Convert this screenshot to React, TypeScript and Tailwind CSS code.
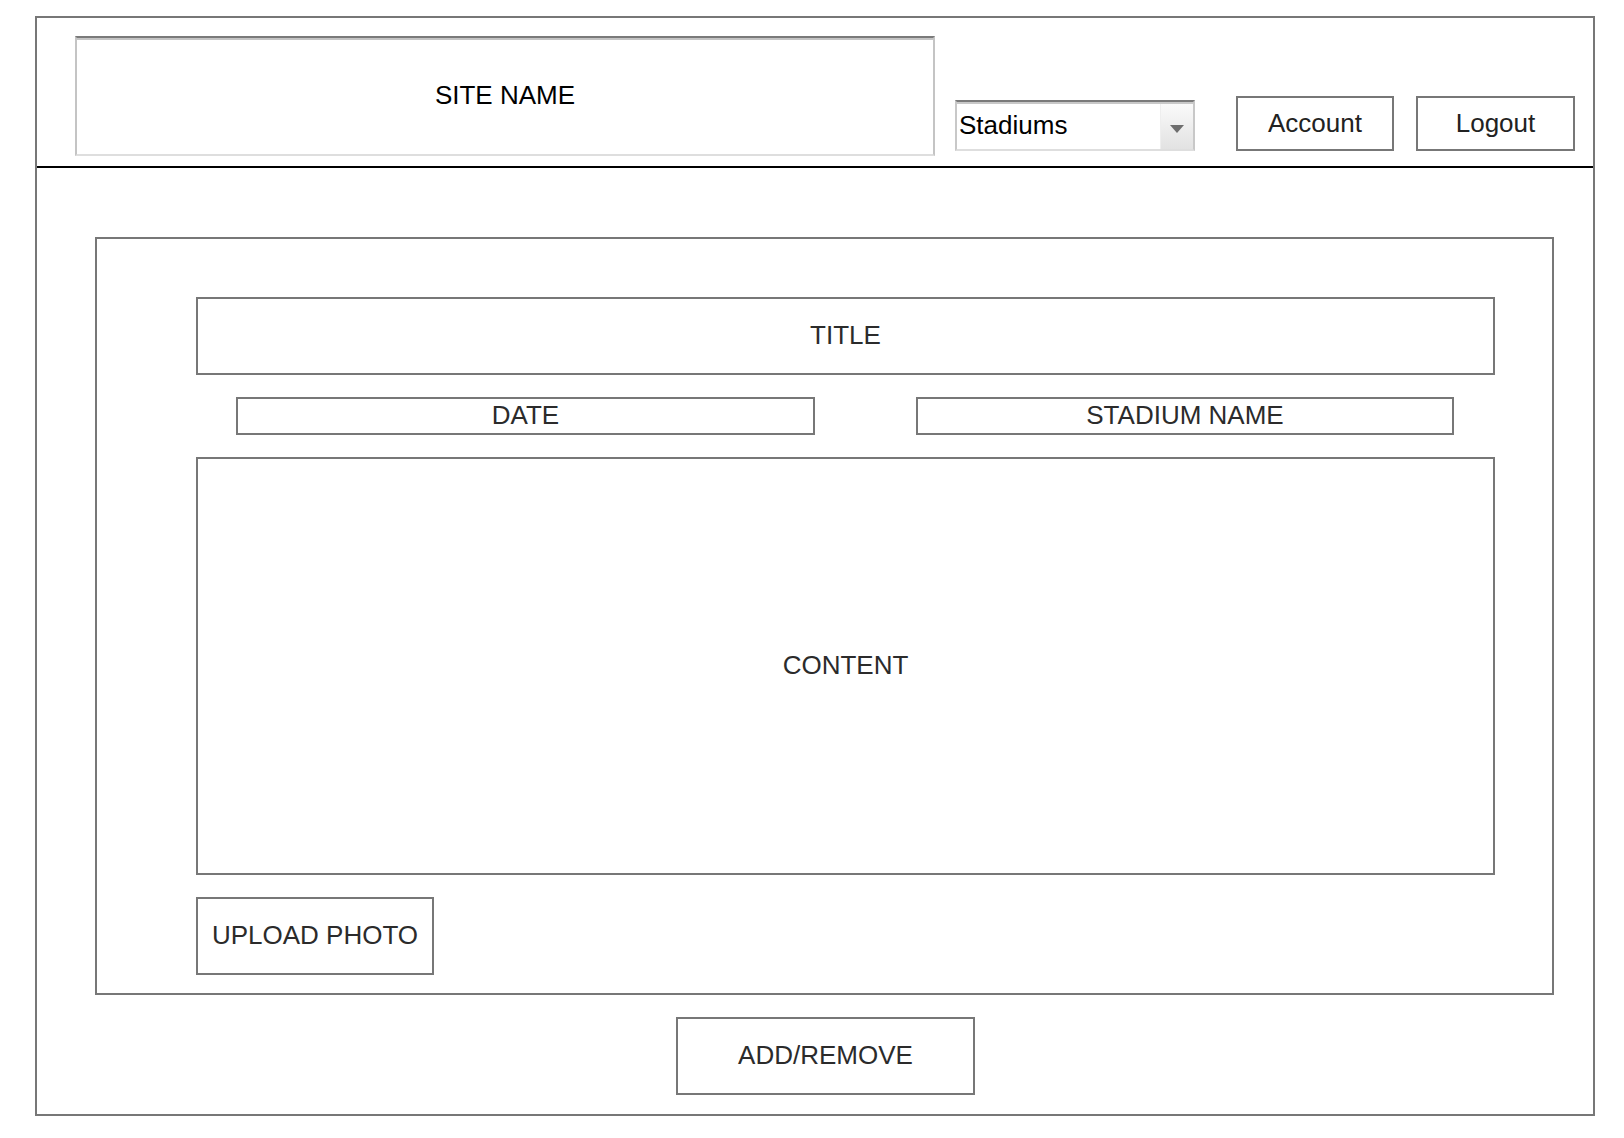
import React from "react";

const font = { fontFamily: '"Liberation Sans", Arial, sans-serif' };

function Box({ className, children }: { className: string; children?: React.ReactNode }) {
  return (
    <div className={`flex items-center justify-center border-2 border-[#777] pb-[2px] text-[26px] leading-none text-[#2b2b2b] ${className}`}>
      {children}
    </div>
  );
}

export default function App() {
  return (
    <div className="w-[1624px] h-[1138px] bg-white pt-[16px] pl-[35px]" style={font}>
      <div className="w-[1560px] h-[1100px] border-2 border-[#777] flex flex-col">
        {/* Header */}
        <div className="h-[150px] border-b-2 border-black flex items-start shrink-0">
          <div className="ml-[38px] mt-[18px] w-[860px] h-[120px] border-2 border-[#c4c4c4] border-t-[#7a7a7a] border-b-[#dedede] shadow-[inset_0_2px_0_#c4c4c4] flex items-center justify-center pb-[2px] text-[26px] text-black leading-none">
            SITE NAME
          </div>
          <div className="ml-[20px] mt-[82px] w-[240px] h-[51px] relative border-2 border-[#c8c8c8] border-t-[#7a7a7a] border-b-[#dedede] shadow-[inset_0_2px_0_#c8c8c8] flex items-center pl-[2px] pb-[2px] text-[26px] leading-none text-black">
            Stadiums
            <div className="absolute right-0 top-[2px] bottom-0 w-[33px] border-l border-[#eeeeee] bg-gradient-to-b from-[#fafafa] to-[#e2e2e2] flex items-center justify-center">
              <div className="mt-[4px] w-0 h-0 border-l-[7px] border-r-[7px] border-t-[8px] border-l-transparent border-r-transparent border-t-[#6e6e6e]" />
            </div>
          </div>
          <div className="ml-[41px] mt-[78px] w-[158px] h-[55px] border-2 border-[#777] flex items-center justify-center pb-[2px] text-[26px] leading-none text-[#222]">
            Account
          </div>
          <div className="ml-[22px] mt-[78px] w-[159px] h-[55px] border-2 border-[#777] flex items-center justify-center pb-[2px] text-[26px] leading-none text-[#222]">
            Logout
          </div>
        </div>

        {/* Body */}
        <div className="flex flex-col">
          <div className="ml-[58px] mt-[69px] w-[1459px] h-[758px] border-2 border-[#777] flex flex-col pl-[99px] pt-[58px]">
            <Box className="w-[1299px] h-[78px]">TITLE</Box>
            <div className="mt-[22px] flex">
              <Box className="ml-[40px] w-[579px] h-[38px]">DATE</Box>
              <Box className="ml-[101px] w-[538px] h-[38px]">STADIUM NAME</Box>
            </div>
            <Box className="mt-[22px] w-[1299px] h-[418px]">CONTENT</Box>
            <Box className="mt-[22px] w-[238px] h-[78px]">UPLOAD PHOTO</Box>
          </div>
          <Box className="ml-[639px] mt-[22px] w-[299px] h-[78px]">ADD/REMOVE</Box>
        </div>
      </div>
    </div>
  );
}
